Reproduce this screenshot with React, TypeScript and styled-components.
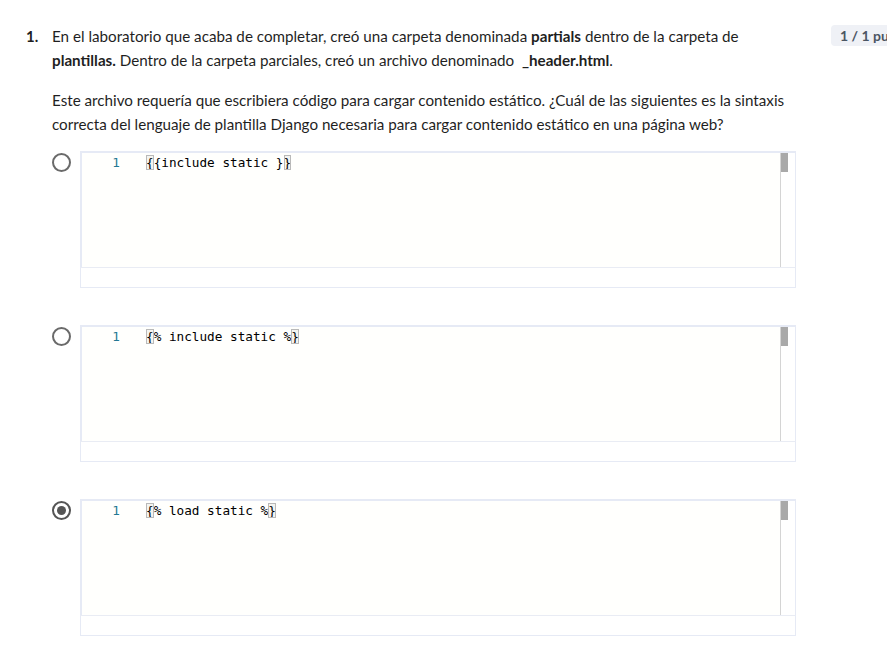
import React from "react";
import styled, { createGlobalStyle } from "styled-components";

const Global = createGlobalStyle`
  html, body { margin: 0; padding: 0; background: #ffffff; overflow: hidden; }
  body { font-family: Lato, "Source Sans Pro", "Open Sans", sans-serif; color: #1f1f1f; }
`;

const Page = styled.div`
  width: 887px;
  height: 658px;
  overflow: hidden;
  padding: 24px 0 0 26px;
  box-sizing: border-box;
`;

const Header = styled.div`
  display: flex;
  align-items: flex-start;
  width: 900px;
`;

const Num = styled.div`
  width: 26px;
  flex-shrink: 0;
  font-weight: 700;
  font-size: 15px;
  line-height: 24px;
`;

const Body = styled.div`
  width: 744px;
  flex-shrink: 0;
`;

const Prompt = styled.p`
  margin: 0;
  font-size: 15.2px;
  line-height: 24px;
`;

const Para = styled.p`
  margin: 16px 0 0 0;
  font-size: 15.2px;
  line-height: 24px;
`;

const Badge = styled.div`
  margin-left: 35px;
  margin-top: 1px;
  flex-shrink: 0;
  background: #eff1f6;
  border-radius: 4px;
  padding: 0 8px 0 9px;
  height: 21px;
  line-height: 21px;
  font-size: 14px;
  font-weight: 700;
  color: #4b5563;
  white-space: nowrap;
`;

const Options = styled.div`
  display: flex;
  flex-direction: column;
  gap: 37px;
  margin-top: 15px;
`;

const Option = styled.div`
  display: flex;
  align-items: flex-start;
  gap: 9px;
`;

const Radio = styled.div<{ $checked?: boolean }>`
  width: 19px;
  height: 19px;
  margin-top: 2px;
  box-sizing: border-box;
  border-radius: 50%;
  border: 2px solid ${(p) => (p.$checked ? "#555555" : "#6a6a6a")};
  display: flex;
  align-items: center;
  justify-content: center;
  flex-shrink: 0;
  &::after {
    content: "";
    display: ${(p) => (p.$checked ? "block" : "none")};
    width: 9px;
    height: 9px;
    border-radius: 50%;
    background: #555555;
  }
`;

const Editor = styled.div`
  width: 716px;
  display: flex;
  flex-direction: column;
`;

const EditorMain = styled.div`
  height: 116px;
  box-sizing: border-box;
  border-top: 2px solid #e6eaf5;
  border-left: 2px solid #e6eaf5;
  border-right: 1px solid #e6eaf5;
  background: #fffffd;
  display: flex;
`;

const Gutter = styled.div`
  width: 38px;
  text-align: right;
  font-family: "DejaVu Sans Mono", "Liberation Mono", monospace;
  font-size: 12.7px;
  line-height: 19px;
  color: #237893;
  padding-top: 0px;
  flex-shrink: 0;
`;

const Code = styled.div`
  flex: 1;
  padding-left: 26px;
  padding-top: 0px;
  font-family: "DejaVu Sans Mono", "Liberation Mono", monospace;
  font-size: 12.7px;
  line-height: 19px;
  color: #000000;
  white-space: pre;
`;

const Match = styled.span`
  outline: 1px solid #b9b9b9;
  outline-offset: -1px;
  background: #f4f4f0;
`;

const ScrollTrack = styled.div`
  width: 14px;
  flex-shrink: 0;
  border-left: 1px solid #d4d4d4;
  background: #ffffff;
  position: relative;
`;

const Thumb = styled.div`
  position: absolute;
  left: 0;
  top: 0;
  width: 7px;
  height: 19px;
  background: #a9a9a9;
`;

const EditorFoot = styled.div`
  height: 21px;
  box-sizing: border-box;
  border: 1px solid #e6eaf5;
  border-top: 1px solid #e9ecf4;
  background: #ffffff;
`;

type Opt = { open: string; mid: string; close: string; checked?: boolean };

const opts: Opt[] = [
  { open: "{", mid: "{include static }", close: "}" },
  { open: "{", mid: "% include static %", close: "}" },
  { open: "{", mid: "% load static %", close: "}", checked: true },
];

export default function App() {
  return (
    <>
      <Global />
      <Page>
        <Header>
          <Num>1.</Num>
          <Body>
            <Prompt>
              En el laboratorio que acaba de completar, creó una carpeta denominada <b>partials</b> dentro de la carpeta de{" "}
              <b>plantillas.</b> Dentro de la carpeta parciales, creó un archivo denominado&nbsp; <b>_header.html</b>.
            </Prompt>
            <Para>
              Este archivo requería que escribiera código para cargar contenido estático. ¿Cuál de las siguientes es la sintaxis
              correcta del lenguaje de plantilla Django necesaria para cargar contenido estático en una página web?
            </Para>
            <Options>
              {opts.map((o, i) => (
                <Option key={i}>
                  <Radio $checked={o.checked} />
                  <Editor>
                    <EditorMain>
                      <Gutter>1</Gutter>
                      <Code>
                        <Match>{o.open}</Match>
                        {o.mid}
                        <Match>{o.close}</Match>
                      </Code>
                      <ScrollTrack>
                        <Thumb />
                      </ScrollTrack>
                    </EditorMain>
                    <EditorFoot />
                  </Editor>
                </Option>
              ))}
            </Options>
          </Body>
          <Badge>1 / 1 punto</Badge>
        </Header>
      </Page>
    </>
  );
}
